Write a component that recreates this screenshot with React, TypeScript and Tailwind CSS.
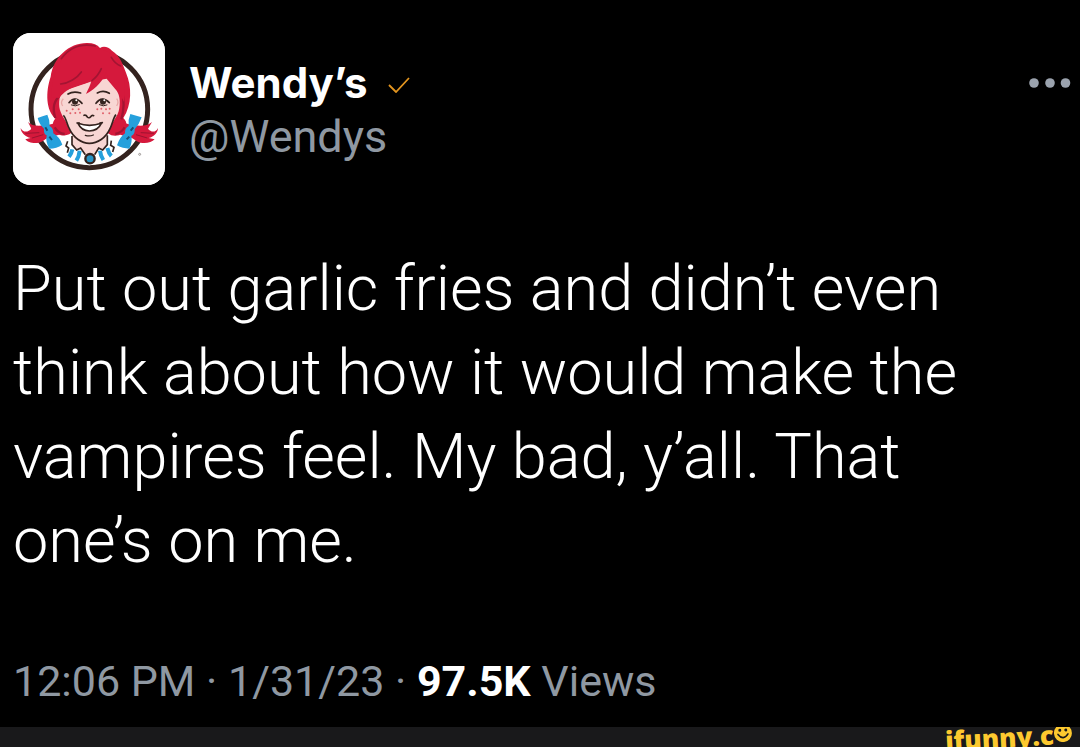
import React from "react";

/** Profile picture: the face inside its ring, with braids and bows. */
function Avatar(): React.ReactElement {
  return (
    <svg
      className="size-38 shrink-0 rounded-[18px] bg-white"
      viewBox="39 39 456 456"
      role="img"
      aria-label="Wendy's"
    >
      <rect x="39" y="39" width="456" height="456" fill="#ffffff" />
      {/* Ring */}
      <circle cx="268" cy="268" r="175" fill="none" stroke="#34231f" strokeWidth="15" />

      {/* Braids */}
      <g fill="#d5193c">
        <path d="M62 324 C70 340 86 336 94 326 L84 306 C98 322 128 318 156 312 L178 306 L184 342 C164 350 146 348 130 362 C114 374 84 370 76 358 L92 354 C76 350 62 338 62 324 Z" />
        <path d="M474 324 C466 340 452 336 444 326 L456 306 C438 322 410 318 384 312 L362 306 L354 342 C374 350 392 348 408 362 C424 374 454 370 464 358 L446 354 C462 350 474 338 474 324 Z" />
      </g>
      <path d="M76 340 L118 338 M96 354 L130 344 M462 340 L422 338 M442 354 L408 344" stroke="#9c1330" strokeWidth="3" fill="none" />

      {/* Neck and dress */}
      <path d="M205 350 L330 350 L344 398 Q310 432 268 436 Q226 432 194 398 Z" fill="#ffffff" />
      <path d="M216 334 L322 334 L322 378 L310 392 L296 386 L284 402 L256 402 L244 386 L230 392 L216 376 Z" fill="#f8d6d3" />

      {/* Hair behind the face */}
      <path
        d="M212 340 C200 350 172 350 162 330 C156 316 158 304 166 296 C138 270 136 218 152 170 C160 112 208 68 262 69 C280 69 292 74 300 84 C312 76 326 82 336 92 C362 108 370 138 378 158 C396 200 396 254 370 294 C384 306 382 330 368 340 C354 350 336 350 324 340 L300 300 L230 300 Z"
        fill="#d5193c"
      />
      <path d="M182 226 C162 240 156 262 166 294 M366 210 C374 244 372 270 364 298 M164 322 Q174 340 194 342 M374 322 Q366 338 346 342" stroke="#a31432" strokeWidth="7" fill="none" />

      {/* Face */}
      <path
        d="M188 214 C176 230 174 258 182 276 C186 288 196 300 201 312 C212 346 238 368 268 369 C298 368 324 346 336 312 C342 300 352 288 356 274 C362 250 360 226 350 212 L320 176 L276 184 Z"
        fill="#f8d6d3"
      />
      <path d="M190 286 C198 292 200 312 208 326 C220 354 246 370 268 370 C292 370 318 354 330 326 C338 310 340 292 348 284" fill="none" stroke="#34231f" strokeWidth="5" />
      <path d="M190 236 Q180 246 188 258 M350 236 Q358 246 350 258" fill="none" stroke="#e9a9a7" strokeWidth="4" />

      {/* Fringe */}
      <path
        d="M154 232 C158 148 182 104 236 88 C280 76 326 88 352 120 C376 150 378 198 372 246 C362 226 354 212 342 198 C326 184 320 168 320 150 C312 180 290 204 258 222 C264 208 272 194 274 182 C248 196 204 196 178 234 Z"
        fill="#d5193c"
      />
      <path d="M182 192 C206 190 232 174 244 156 M276 182 C286 174 298 160 304 146 M334 112 C342 126 352 134 362 138 M184 116 C210 80 246 70 286 78" fill="none" stroke="#a31432" strokeWidth="5" strokeLinecap="round" />

      {/* Brows, eyes and nose */}
      <g fill="none" stroke="#34231f" strokeLinecap="round">
        <path d="M204 222 Q220 212 242 219 M292 219 Q310 209 328 220" strokeWidth="5" />
        <path d="M207 248 Q224 226 246 250 M288 250 Q306 226 328 248" strokeWidth="5" />
        <path d="M214 255 Q226 261 238 254 M298 254 Q310 261 321 255" strokeWidth="3" />
        <path d="M252 286 Q258 284 262 291 Q267 296 272 290 Q276 284 281 287" strokeWidth="5" />
      </g>
      <g fill="#34231f">
        <circle cx="225" cy="245" r="9" />
        <circle cx="309" cy="245" r="9" />
      </g>
      <g fill="#ffffff">
        <circle cx="229" cy="241" r="3" />
        <circle cx="313" cy="241" r="3" />
      </g>

      {/* Freckles */}
      <g fill="#e0606a">
        <circle cx="200" cy="272" r="3" />
        <circle cx="211" cy="280" r="3" />
        <circle cx="218" cy="268" r="3" />
        <circle cx="226" cy="279" r="3" />
        <circle cx="236" cy="268" r="3" />
        <circle cx="240" cy="278" r="3" />
        <circle cx="292" cy="268" r="3" />
        <circle cx="304" cy="266" r="3" />
        <circle cx="309" cy="280" r="3" />
        <circle cx="318" cy="268" r="3" />
        <circle cx="329" cy="266" r="3" />
        <circle cx="328" cy="280" r="3" />
      </g>

      {/* Smile */}
      <path d="M234 310 Q268 322 304 310 Q294 332 268 333 Q244 332 234 310 Z" fill="#ffffff" stroke="#34231f" strokeWidth="5" strokeLinejoin="round" />
      <path d="M231 309 L238 309 M300 309 L307 308" stroke="#34231f" strokeWidth="5" strokeLinecap="round" />
      <path d="M256 346 Q268 350 280 345" stroke="#34231f" strokeWidth="4" fill="none" strokeLinecap="round" />

      {/* Collar */}
      <path
        d="M203 364 L198 378 L206 384 L202 398 M216 348 L216 374 L230 390 L242 384 L256 404 M322 346 L322 374 L308 390 L296 384 L284 404 M334 362 L332 376 L342 382 L338 396"
        fill="none"
        stroke="#34231f"
        strokeWidth="5"
      />
      <g fill="none" stroke="#25a0dc" strokeWidth="12">
        <path d="M217 388 Q215 400 207 410 M239 392 Q237 410 229 422 M300 392 Q302 408 310 420 M322 384 Q326 400 334 408" />
      </g>
      <circle cx="270" cy="416" r="14" fill="#2793c4" stroke="#34231f" strokeWidth="7" />

      {/* Bows */}
      <g fill="#25a0dc">
        <path d="M113 294 Q128 288 142 284 Q150 300 149 318 Q160 324 160 340 Q178 350 187 374 Q170 386 148 386 Q136 366 140 346 Q130 342 132 326 Q118 314 113 294 Z" />
        <path d="M425 292 Q410 288 391 282 Q384 298 386 318 Q374 324 375 340 Q360 350 351 376 Q368 386 388 386 Q398 366 394 348 Q406 342 404 328 Q418 312 425 292 Z" />
      </g>
      <path d="M136 322 L142 332 M148 350 L156 360 M400 322 L392 332 M388 350 L380 358" stroke="#164f73" strokeWidth="6" />
      <circle cx="419" cy="403" r="3" fill="none" stroke="#77706e" strokeWidth="2" />
    </svg>
  );
}

function Smiley(): React.ReactElement {
  return (
    <svg className="size-[18px]" viewBox="0 0 18 18" aria-hidden="true">
      <circle cx="9" cy="9" r="9" fill="#fdc92f" />
      <circle cx="6" cy="6" r="1.5" fill="#19191b" />
      <circle cx="12" cy="6" r="1.5" fill="#19191b" />
      <path d="M4 10 Q9 17 14 10" fill="none" stroke="#19191b" strokeWidth="1.6" strokeLinecap="round" />
    </svg>
  );
}

export default function App(): React.ReactElement {
  return (
    <div className="flex min-h-screen flex-col bg-black font-[Roboto,sans-serif] text-white">
      <article className="flex grow flex-col px-[13px] pt-[33px]">
        <header className="flex items-start">
          <Avatar />
          <div className="ml-6 grow pt-6">
            <div className="flex h-[52px] items-center gap-5">
              <h1 className="font-['Inter',sans-serif] text-[42px] leading-[52px] font-bold">Wendy’s</h1>
              <svg className="mt-1 h-4 w-[22px]" viewBox="0 0 22 16" role="img" aria-label="Verified">
                <path d="M1 8 L8 15 L21 1" fill="none" stroke="#e3951f" strokeWidth="1.8" />
              </svg>
            </div>
            <p className="text-[45px] leading-[56px] text-[#8f98a2]">@Wendys</p>
          </div>
          <button type="button" aria-label="More" className="-mr-1 pt-11">
            <svg className="h-3 w-[42px]" viewBox="0 0 42 12" fill="#9ba3ae">
              <circle cx="5" cy="6" r="4.8" />
              <circle cx="21" cy="6" r="4.8" />
              <circle cx="36.5" cy="6" r="4.8" />
            </svg>
          </button>
        </header>

        <p className="mt-[62px] max-w-[980px] text-[63px] leading-[84px] font-light">Put out garlic fries and didn’t even think about how it would make the vampires feel. My bad, y’all. That one’s on me.</p>

        <p className="mt-[68px] pb-3 text-[43px] leading-[60px] text-[#8f98a2]">
          12:06 PM · 1/31/23 · <strong className="font-bold text-white">97.5K</strong> Views
        </p>
      </article>

      <footer className="flex h-5 shrink-0 items-start justify-end overflow-hidden bg-[#19191b] pr-2">
        <div className="flex -rotate-3 items-end font-['Open_Sans',sans-serif] text-[26px] leading-4 font-extrabold text-[#fdc92f]">
          <span>ifunny.c</span>
          <Smiley />
        </div>
      </footer>
    </div>
  );
}
